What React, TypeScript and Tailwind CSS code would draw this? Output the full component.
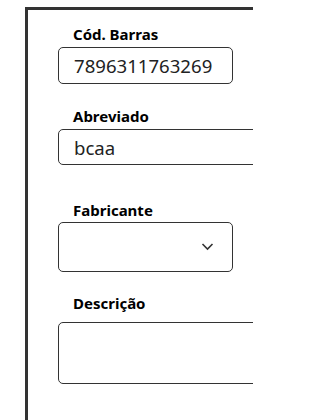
import React from 'react';

const font = { fontFamily: '"Noto Sans", "Open Sans", Arial, sans-serif' };

export default function App() {
  return (
    <div className="w-[253px] h-[420px] bg-white pt-[7px] pl-[25px] overflow-hidden" style={font}>
      <div className="h-[413px] w-[260px] border-l-[3px] border-t-[3px] border-[#333333] pl-[30px] pt-[15px]">
        {/* Cód. Barras */}
        <label className="block pl-[15px] text-[15px] leading-[19px] font-bold text-black mb-[3px]">
          Cód. Barras
        </label>
        <input
          type="text"
          defaultValue="7896311763269"
          className="block w-[175px] h-[37px] px-[15px] border border-[#333333] rounded-[5px] text-[18.6px] text-[#222222] outline-none"
        />

        {/* Abreviado */}
        <label className="block mt-[23px] pl-[15px] text-[15px] leading-[19px] font-bold text-black mb-[3px]">
          Abreviado
        </label>
        <input
          type="text"
          defaultValue="bcaa"
          className="block w-[240px] h-[36px] px-[15px] border border-[#333333] rounded-[5px] text-[18.6px] text-[#222222] outline-none"
        />

        {/* Fabricante */}
        <label className="block mt-[36px] pl-[15px] text-[15px] leading-[19px] font-bold text-black mb-[2px]">
          Fabricante
        </label>
        <div className="relative w-[175px] h-[50px] border border-[#333333] rounded-[5px]">
          <svg
            className="absolute left-[142px] top-[19px]"
            width="13"
            height="9"
            viewBox="0 0 13 9"
            fill="none"
          >
            <path d="M1.5 2 L6.5 7 L11.5 2" stroke="#333333" strokeWidth="1.6" />
          </svg>
        </div>

        {/* Descrição */}
        <label className="block mt-[22px] pl-[15px] text-[15px] leading-[19px] font-bold text-black mb-[9px]">
          Descrição
        </label>
        <textarea className="block w-[240px] h-[62px] border border-[#333333] rounded-[5px] resize-none outline-none" />
      </div>
    </div>
  );
}
